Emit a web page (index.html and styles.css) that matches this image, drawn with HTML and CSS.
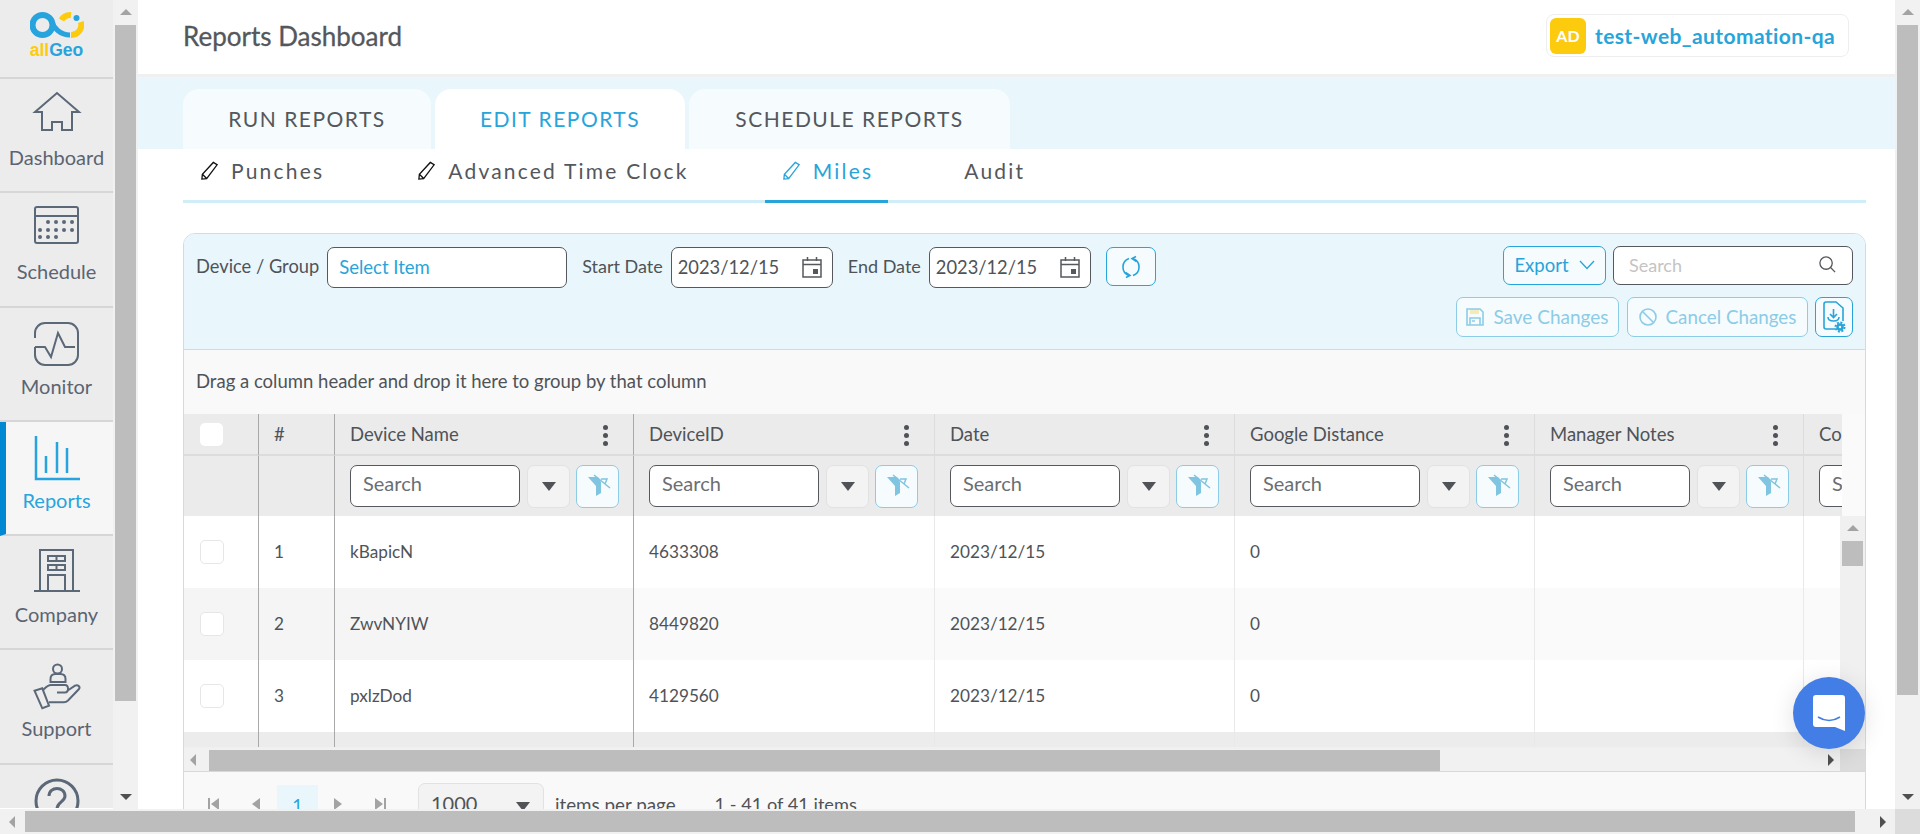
FILE: index.html
```html
<!doctype html>
<html lang="en">
<head>
    <meta charset="utf-8">
    <title>Reports Dashboard</title>
    <link rel="stylesheet" href="styles.css">
</head>
<body>
    <div class="page">
        <nav class="sidebar">
            <div class="logo">
                <svg class="logo-mark" viewBox="0 0 54 28" width="54" height="28">
                    <circle cx="12.500" cy="14" r="10" fill="none" stroke="#27a4de" stroke-width="6"/>
                    <path d="M22 11C24 17 30 24 40 24" fill="none" stroke="#27a4de" stroke-width="5"/>
                    <path d="M31.500 9A10 10 0 0 1 41 4" fill="none" stroke="#fdcb0e" stroke-width="6"/>
                    <path d="M50.800 11A10 10 0 0 1 41 24" fill="none" stroke="#fdcb0e" stroke-width="6"/>
                    <circle cx="46.500" cy="7" r="3" fill="#27a4de"/>
                </svg>
                <div class="logo-name"><span class="logo-all">all</span>Geo</div>
            </div>
            <a class="nav-item">
                <svg class="nav-icon" viewBox="0 0 46 46"><path d="M1 20 23 1 45 20H38V38H28V30H18V38H8V20Z"/></svg>
                <span>Dashboard</span>
            </a>
            <a class="nav-item">
                <svg class="nav-icon" viewBox="0 0 46 46">
                    <rect x="1" y="1" width="43" height="36" rx="2"/>
                    <path d="M1 10H44"/>
                    <path class="dots" d="M14 16h.01M22 16h.01M30 16h.01M38 16h.01M6 24h.01M14 24h.01M22 24h.01M30 24h.01M38 24h.01M6 31h.01M14 31h.01M22 31h.01"/>
                </svg>
                <span>Schedule</span>
            </a>
            <a class="nav-item">
                <svg class="nav-icon" viewBox="0 0 46 46">
                    <path d="M1 17V12A10 10 0 0 1 11 2H34A10 10 0 0 1 44 12V34A10 10 0 0 1 34 44H11A10 10 0 0 1 1 34V26"/>
                    <path d="M1 26H11L17 36 24 12 31 26H41"/>
                </svg>
                <span>Monitor</span>
            </a>
            <a class="nav-item active">
                <svg class="nav-icon" viewBox="0 0 46 46">
                    <path d="M2 1V44H46"/>
                    <path d="M12 21V38M23 7V38M33 13V38"/>
                </svg>
                <span>Reports</span>
            </a>
            <a class="nav-item">
                <svg class="nav-icon" viewBox="0 0 46 46">
                    <path d="M0 42H46M6 42V1H39V42"/>
                    <rect x="14" y="7" width="17" height="5"/>
                    <rect x="14" y="16" width="17" height="5"/>
                    <path d="M22.500 7V12M22.500 16V21M14 42V26H31V42"/>
                </svg>
                <span>Company</span>
            </a>
            <a class="nav-item">
                <svg class="nav-icon" viewBox="0 0 46 46">
                    <circle cx="23.500" cy="6" r="4.500"/>
                    <path d="M16.500 19V16Q16.500 11 21.500 11H26.500Q31.500 11 31.500 16V19Z"/>
                    <path d="M0.500 27.700 8.300 25.300 15 42.700 8.300 45.300Z"/>
                    <path d="M9.300 26.700C12 24 14 22 17 22H31C35 22 35 29.500 31 29.500H23M33 28 41 22.700C44 21 46.500 24 45 26L34 37.500Q32 39.300 30 39.300H15"/>
                </svg>
                <span>Support</span>
            </a>
            <a class="nav-item">
                <svg class="nav-icon help-icon" viewBox="0 0 46 46">
                    <circle cx="23" cy="23" r="21"/>
                    <path d="M15 18C15 8 31 8 31 18 31 24 23 24 23 31"/>
                </svg>
            </a>
        </nav>
        <div class="vbar">
            <div class="arrow-up"></div>
            <div class="vbar-thumb side-thumb"></div>
            <div class="arrow-down"></div>
        </div>

        <main class="main">
            <header class="topbar">
                <h1 class="title">Reports Dashboard</h1>
                <div class="account"><span class="avatar">AD</span><span class="account-name">test-web_automation-qa</span></div>
            </header>

            <div class="tabs-band">
                <a class="tab tab-run">RUN REPORTS</a>
                <a class="tab tab-edit active">EDIT REPORTS</a>
                <a class="tab tab-schedule">SCHEDULE REPORTS</a>
            </div>

            <div class="content">
                <div class="subtabs">
                    <a class="subtab">
                        <svg class="pencil" viewBox="0 0 20 20"><path d="M14 1.500 18 4 7 18.500 2 19 2.500 14ZM2.500 14 7 18.500"/></svg>
                        Punches
                    </a>
                    <a class="subtab">
                        <svg class="pencil" viewBox="0 0 20 20"><path d="M14 1.500 18 4 7 18.500 2 19 2.500 14ZM2.500 14 7 18.500"/></svg>
                        Advanced Time Clock
                    </a>
                    <a class="subtab active">
                        <svg class="pencil" viewBox="0 0 20 20"><path d="M14 1.500 18 4 7 18.500 2 19 2.500 14ZM2.500 14 7 18.500"/></svg>
                        Miles
                    </a>
                    <a class="subtab no-icon">Audit</a>
                </div>

                <section class="panel">
                    <div class="toolbar">
                        <div class="filters">
                            <label>Device / Group</label>
                            <div class="field field-device link">Select Item</div>
                            <label class="date-label">Start Date</label>
                            <div class="field field-date">2023/12/15
                                <svg class="cal" viewBox="0 0 20 22"><path d="M1 4H19V21H1ZM1 8.500H19M5.500 1V5M14.500 1V5"/><rect class="cal-fill" x="11" y="13" width="5" height="5"/></svg>
                            </div>
                            <label class="date-label">End Date</label>
                            <div class="field field-date">2023/12/15
                                <svg class="cal" viewBox="0 0 20 22"><path d="M1 4H19V21H1ZM1 8.500H19M5.500 1V5M14.500 1V5"/><rect class="cal-fill" x="11" y="13" width="5" height="5"/></svg>
                            </div>
                            <button class="btn btn-refresh">
                                <svg viewBox="0 0 24 24" width="24" height="24"><path d="M10 3.500A9 9 0 0 0 10 20.500M14 20.500A9 9 0 0 0 14 3.500M6.500 17.500 11 20.500 7 22.500M17.500 6.500 13 3.500 17 1.500"/></svg>
                            </button>
                        </div>
                        <div class="actions">
                            <div class="actions-row">
                                <button class="btn btn-export">Export
                                    <svg viewBox="0 0 16 10" width="16" height="10"><path d="M1 1 8 8.500 15 1"/></svg>
                                </button>
                                <div class="field field-search">Search
                                    <svg viewBox="0 0 20 20" width="19" height="19"><circle cx="8.500" cy="8.500" r="6.500"/><path d="M13.500 13.500 18 18"/></svg>
                                </div>
                            </div>
                            <div class="actions-row row-second">
                                <button class="btn btn-faded btn-save">
                                    <svg viewBox="0 0 18 18" width="18" height="18"><path class="floppy" d="M4 1H13V6H4Z"/><path d="M1 1H14L17 4V17H1Z"/><path d="M4 17V10H14V17M6 13H9"/></svg>
                                    Save Changes
                                </button>
                                <button class="btn btn-faded btn-cancel">
                                    <svg viewBox="0 0 18 18" width="18" height="18"><circle cx="9" cy="9" r="8"/><path d="M3.500 3.500 14.500 14.500"/></svg>
                                    Cancel Changes
                                </button>
                                <button class="btn btn-config">
                                    <svg viewBox="0 0 24 32" width="24" height="32">
                                        <path d="M13 28H4Q2 28 2 26V3Q2 1 4 1H14L21 7V20"/>
                                        <path d="M11.500 8V16M8 13 11.500 16.500 15 13M6 16Q6 20 11.500 20 17 20 17 16"/>
                                        <circle class="gear" cx="18" cy="26" r="2.500"/>
                                        <circle class="gear-teeth" cx="18" cy="26" r="4.500"/>
                                    </svg>
                                </button>
                            </div>
                        </div>
                    </div>

                    <div class="group-hint">Drag a column header and drop it here to group by that column</div>

                    <div class="grid-head">
                        <div class="head-scroll">
                            <div class="cols">
                                <div class="hcell"><span class="check check-head"></span></div>
                                <div class="hcell">#</div>
                                <div class="hcell">Device Name<span class="kebab"></span></div>
                                <div class="hcell light">DeviceID<span class="kebab"></span></div>
                                <div class="hcell light">Date<span class="kebab"></span></div>
                                <div class="hcell light">Google Distance<span class="kebab"></span></div>
                                <div class="hcell light">Manager Notes<span class="kebab"></span></div>
                                <div class="hcell light">Comments</div>
                            </div>
                            <div class="cols filter-row">
                                <div class="fcell"></div>
                                <div class="fcell"></div>
                                <div class="fcell">
                                    <div class="filter-input">Search</div>
                                    <button class="filter-op"></button>
                                    <button class="filter-clear"><svg viewBox="1 1 41 41"><path class="fill" d="M12 12H22L25 17V28L20 31V21Z"/><path class="line" d="M18 10 34 23M25 14H31L29 19"/></svg></button>
                                </div>
                                <div class="fcell light">
                                    <div class="filter-input">Search</div>
                                    <button class="filter-op"></button>
                                    <button class="filter-clear"><svg viewBox="1 1 41 41"><path class="fill" d="M12 12H22L25 17V28L20 31V21Z"/><path class="line" d="M18 10 34 23M25 14H31L29 19"/></svg></button>
                                </div>
                                <div class="fcell light">
                                    <div class="filter-input">Search</div>
                                    <button class="filter-op"></button>
                                    <button class="filter-clear"><svg viewBox="1 1 41 41"><path class="fill" d="M12 12H22L25 17V28L20 31V21Z"/><path class="line" d="M18 10 34 23M25 14H31L29 19"/></svg></button>
                                </div>
                                <div class="fcell light">
                                    <div class="filter-input">Search</div>
                                    <button class="filter-op"></button>
                                    <button class="filter-clear"><svg viewBox="1 1 41 41"><path class="fill" d="M12 12H22L25 17V28L20 31V21Z"/><path class="line" d="M18 10 34 23M25 14H31L29 19"/></svg></button>
                                </div>
                                <div class="fcell light">
                                    <div class="filter-input narrow">Search</div>
                                    <button class="filter-op"></button>
                                    <button class="filter-clear"><svg viewBox="1 1 41 41"><path class="fill" d="M12 12H22L25 17V28L20 31V21Z"/><path class="line" d="M18 10 34 23M25 14H31L29 19"/></svg></button>
                                </div>
                                <div class="fcell light">
                                    <div class="filter-input">Search</div>
                                </div>
                            </div>
                        </div>
                    </div>

                    <div class="grid-body">
                        <div class="grid-rows">
                            <div class="cols data-row">
                                <div class="cell"><span class="check"></span></div>
                                <div class="cell">1</div>
                                <div class="cell">kBapicN</div>
                                <div class="cell light">4633308</div>
                                <div class="cell light">2023/12/15</div>
                                <div class="cell light">0</div>
                                <div class="cell light"></div>
                                <div class="cell light"></div>
                            </div>
                            <div class="cols data-row alt">
                                <div class="cell locked"><span class="check"></span></div>
                                <div class="cell locked">2</div>
                                <div class="cell locked">ZwvNYIW</div>
                                <div class="cell light">8449820</div>
                                <div class="cell light">2023/12/15</div>
                                <div class="cell light">0</div>
                                <div class="cell light"></div>
                                <div class="cell light"></div>
                            </div>
                            <div class="cols data-row">
                                <div class="cell"><span class="check"></span></div>
                                <div class="cell">3</div>
                                <div class="cell">pxlzDod</div>
                                <div class="cell light">4129560</div>
                                <div class="cell light">2023/12/15</div>
                                <div class="cell light">0</div>
                                <div class="cell light"></div>
                                <div class="cell light"></div>
                            </div>
                            <div class="cols data-row rest">
                                <div class="cell"></div>
                                <div class="cell"></div>
                                <div class="cell"></div>
                                <div class="cell light"></div>
                                <div class="cell light"></div>
                                <div class="cell light"></div>
                                <div class="cell light"></div>
                                <div class="cell light"></div>
                            </div>
                        </div>
                        <div class="grid-vbar">
                            <div class="arrow-up"></div>
                            <div class="vbar-thumb grid-thumb"></div>
                        </div>
                    </div>

                    <div class="hbar grid-hbar">
                        <div class="arrow-left"></div>
                        <div class="hbar-thumb grid-hthumb"></div>
                        <div class="arrow-right"></div>
                        <div class="corner"></div>
                    </div>

                    <div class="pager">
                        <span class="page-link first"></span>
                        <span class="page-link prev"></span>
                        <span class="page-current">1</span>
                        <span class="page-link next"></span>
                        <span class="page-link last"></span>
                        <div class="page-size">1000<span class="caret"></span></div>
                        <span class="page-note">items per page</span>
                        <span class="page-info">1 - 41 of 41 items</span>
                    </div>
                </section>
            </div>

            <button class="chat">
                <svg viewBox="0 0 32 36" width="32" height="36">
                    <path class="chat-bubble" d="M3 0H29Q32 0 32 3V36L22 32H3Q0 32 0 29V3Q0 0 3 0Z"/>
                    <path class="chat-smile" d="M5 22Q16 29 27 22"/>
                </svg>
            </button>
        </main>

        <div class="vbar">
            <div class="arrow-up"></div>
            <div class="vbar-thumb page-thumb"></div>
            <div class="arrow-down"></div>
        </div>
    </div>

    <div class="hbar page-hbar">
        <div class="arrow-left"></div>
        <div class="hbar-thumb page-hthumb"></div>
        <div class="arrow-right"></div>
        <div class="corner"></div>
    </div>
</body>
</html>
```

FILE: styles.css
```css
* {
    box-sizing: border-box;
}

html, body {
    height: 100%;
}

body {
    margin: 0;
    display: flex;
    flex-direction: column;
    overflow: hidden;
    font-family: Lato, 'Open Sans', sans-serif;
    color: #4f5358;
    background-color: #fff;
}

button {
    font-family: inherit;
    background: none;
    padding: 0;
}

.page {
    display: flex;
    height: 809px;
    flex: none;
}

/* sidebar */
.sidebar {
    width: 113px;
    flex: none;
    height: 808px;
    overflow: hidden;
    background-color: #ececec;
}

.logo {
    height: 79px;
    padding-top: 11px;
    border-bottom: 2px solid #d6d6d6;
    text-align: center;
}

.logo-mark {
    display: block;
    margin: 0 auto;
}

.logo-name {
    margin-top: 2px;
    font-family: 'Liberation Sans', sans-serif;
    font-size: 17.500px;
    line-height: 19px;
    font-weight: 700;
    color: #27a4de;
}

.logo-all {
    color: #fdcb0e;
}

.nav-item {
    display: flex;
    flex-direction: column;
    align-items: center;
    height: 114.300px;
    padding-top: 13px;
    border-bottom: 2px solid #d6d6d6;
    font-size: 20px;
    line-height: 24px;
    color: #5b6472;
}

.nav-icon {
    width: 46px;
    height: 46px;
    flex: none;
    margin-bottom: 7px;
    fill: none;
    stroke: #5b6878;
    stroke-width: 2;
    overflow: visible;
}

.dots {
    stroke-width: 4;
    stroke-linecap: round;
}

.help-icon {
    stroke-width: 3;
}

.nav-item.active {
    background-color: #f6f6f6;
    border-left: 6px solid #0088d2;
    padding-right: 6px;
    color: #27a4de;
}

.nav-item.active .nav-icon {
    stroke: #27a4de;
    stroke-width: 2.500;
}

/* scrollbars */
.vbar {
    width: 25px;
    flex: none;
    display: flex;
    flex-direction: column;
    align-items: center;
    position: relative;
    background-color: #f1f1f1;
}

.vbar-thumb {
    width: 21px;
    background-color: #bdbdbd;
}

.side-thumb {
    height: 676px;
}

.page-thumb {
    height: 670px;
}

.arrow-up, .arrow-down {
    width: 100%;
    height: 25px;
    flex: none;
    position: relative;
}

.arrow-up::after, .arrow-down::after {
    content: "";
    position: absolute;
    left: 7px;
    border-left: 6px solid transparent;
    border-right: 6px solid transparent;
}

.arrow-up::after {
    top: 9px;
    border-bottom: 6px solid #a3a3a3;
}

.arrow-down {
    margin-top: auto;
    margin-bottom: 3px;
}

.arrow-down::after {
    bottom: 6px;
    border-top: 6px solid #505050;
}

.hbar {
    display: flex;
    align-items: center;
    background-color: #f1f1f1;
}

.page-hbar {
    height: 25px;
    flex: none;
}

.hbar-thumb {
    height: 21px;
    background-color: #bdbdbd;
}

.page-hthumb {
    width: 1830px;
}

.arrow-left, .arrow-right {
    height: 100%;
    flex: none;
    position: relative;
}

.arrow-left {
    width: 25px;
}

.arrow-right {
    flex: 1;
}

.arrow-left::after, .arrow-right::after {
    content: "";
    position: absolute;
    top: 50%;
    margin-top: -6px;
    border-top: 6px solid transparent;
    border-bottom: 6px solid transparent;
}

.arrow-left::after {
    left: 9px;
    border-right: 6px solid #a3a3a3;
}

.arrow-right::after {
    right: 9px;
    border-left: 6px solid #505050;
}

.corner {
    width: 25px;
    height: 100%;
    flex: none;
    background-color: #dcdcdc;
}

/* main */
.main {
    flex: 1;
    min-width: 0;
    position: relative;
    overflow: hidden;
    background-color: #fff;
}

.topbar {
    height: 77px;
    padding: 0 46px 3px 45px;
    display: flex;
    align-items: center;
    justify-content: space-between;
    border-bottom: 3px solid #f0f0f0;
}

.title {
    margin: 0;
    font-size: 26px;
    font-weight: 400;
    color: #54575b;
    -webkit-text-stroke: 0.3px #54575b;
}

.account {
    width: 303px;
    height: 43px;
    padding-left: 3px;
    display: flex;
    align-items: center;
    border: 1px solid #eeeeee;
    border-radius: 8px;
}

.avatar {
    width: 36px;
    height: 36px;
    margin-right: 9px;
    display: flex;
    align-items: center;
    justify-content: center;
    border-radius: 6px;
    background-color: #fdcb0e;
    color: #fff;
    font-size: 16px;
    font-weight: 700;
}

.account-name {
    font-size: 21px;
    font-weight: 700;
    letter-spacing: 0.4px;
    color: #27a4d9;
}

.tabs-band {
    height: 72px;
    padding: 12px 0 0 45px;
    display: flex;
    gap: 4px;
    background-color: #e9f7fd;
}

.tab {
    padding-bottom: 2px;
    display: flex;
    align-items: center;
    justify-content: center;
    border-radius: 16px 16px 0 0;
    background-color: #f6fbfe;
    font-size: 21px;
    letter-spacing: 1.500px;
    color: #54575b;
}

.tab-run {
    width: 248px;
}

.tab-edit {
    width: 250px;
}

.tab-schedule {
    width: 321px;
}

.tab.active {
    background-color: #fff;
    color: #27a4d9;
}

.content {
    padding: 0 29px 0 45px;
}

.subtabs {
    height: 54px;
    display: flex;
    gap: 61px;
    border-bottom: 3px solid #d0eef8;
}

.subtab {
    height: 54px;
    padding: 0 15px 9px 17px;
    display: flex;
    align-items: center;
    gap: 12px;
    border-bottom: 3px solid transparent;
    font-size: 21px;
    letter-spacing: 2.200px;
    color: #54575b;
    white-space: nowrap;
}

.subtab.no-icon {
    padding-left: 15px;
}

.subtab.active {
    border-bottom-color: #27a4d9;
    color: #27a4d9;
}

.pencil {
    width: 19px;
    height: 19px;
    fill: none;
    stroke: #111;
    stroke-width: 1.400;
}

.subtab.active .pencil {
    stroke: #27a4d9;
}

/* panel */
.panel {
    margin-top: 30px;
    border: 1px solid #c5e0ea;
    border-radius: 12px 12px 0 0;
    font-size: 18.500px;
    overflow: hidden;
}

.toolbar {
    height: 116px;
    padding: 13px 12px 0;
    display: flex;
    justify-content: space-between;
    border-bottom: 1px solid #c5e0ea;
    background-color: #e9f7fd;
}

.filters {
    height: 41px;
    display: flex;
    align-items: center;
}

.filters label {
    margin-right: 8px;
    padding-bottom: 4px;
    font-size: 18.300px;
    white-space: nowrap;
}

.filters .date-label {
    margin-left: 15px;
    font-size: 18px;
}

.field {
    height: 41px;
    display: flex;
    align-items: center;
    border: 1px solid #55585c;
    border-radius: 7px;
    background-color: #fff;
}

.field-device {
    width: 240px;
    padding: 0 0 2px 11px;
}

.link {
    color: #27a4d9;
}

.field-date {
    width: 162px;
    padding: 0 10px 2px 6px;
    justify-content: space-between;
    font-size: 18.300px;
}

.cal {
    width: 20px;
    height: 22px;
    fill: none;
    stroke: #55585c;
    stroke-width: 1.500;
}

.cal-fill {
    fill: #55585c;
    stroke: none;
}

.btn {
    display: inline-flex;
    align-items: center;
    justify-content: center;
    border: 1px solid #27a4d9;
    border-radius: 7px;
    background-color: #f6fbfe;
    color: #27a4d9;
    font-size: 18.500px;
}

.btn svg {
    fill: none;
    stroke: currentColor;
    stroke-width: 1.600;
}

.btn-refresh {
    width: 50px;
    height: 39px;
    margin: -2px 0 0 15px;
}

.actions {
    margin-top: -1px;
    display: flex;
    flex-direction: column;
    align-items: flex-end;
}

.actions-row {
    display: flex;
    height: 39px;
}

.btn-export {
    width: 103px;
    gap: 10px;
    margin-right: 7px;
    padding-bottom: 2px;
}

.btn-export svg {
    stroke-width: 1.300;
}

.field-search {
    width: 240px;
    height: 39px;
    padding: 0 15px 2px;
    justify-content: space-between;
    font-size: 18px;
    color: #c4c4c4;
}

.field-search svg {
    fill: none;
    stroke: #55585c;
    stroke-width: 1.400;
}

.row-second {
    height: 40px;
    margin-top: 12px;
}

.btn-faded {
    gap: 9px;
    padding-bottom: 1px;
    border-color: #8ccce6;
    color: #8ccce6;
    white-space: nowrap;
}

.btn-save {
    width: 163px;
    margin-right: 8px;
    font-size: 19px;
}

.btn-save svg .floppy {
    fill: #f2ecbc;
    stroke: none;
}

.btn-cancel {
    width: 181px;
    margin-right: 7px;
    font-size: 18.800px;
}

.btn-config {
    width: 38px;
}

.btn-config svg .gear {
    stroke-width: 2.500;
}

.btn-config svg .gear-teeth {
    stroke-width: 2;
    stroke-dasharray: 2 1.500;
}

.group-hint {
    height: 64px;
    padding: 0 0 3px 12px;
    display: flex;
    align-items: center;
    background-color: #f9f9f9;
    white-space: nowrap;
}

/* grid */
.grid-head {
    height: 102px;
    padding-right: 23px;
    background-color: #fafafa;
}

.head-scroll {
    height: 100%;
    overflow: hidden;
}

.cols {
    display: grid;
    grid-template-columns: 75px 76px 299px 301px 300px 300px 269px 300px;
    width: 2120px;
}

.hcell {
    height: 42px;
    padding: 0 15px;
    position: relative;
    display: flex;
    align-items: center;
    background-color: #ebebeb;
    border-right: 1px solid #a9a9a9;
    border-bottom: 2px solid #dcdcdc;
    white-space: nowrap;
}

.hcell.light, .fcell.light {
    border-right-color: #dcdcdc;
}

.kebab {
    position: absolute;
    right: 25px;
    top: 11px;
    width: 5px;
    height: 5px;
    border-radius: 50%;
    background-color: #4f5358;
    box-shadow: 0 8px 0 #4f5358, 0 16px 0 #4f5358;
}

.fcell {
    height: 60px;
    padding: 0 15px;
    display: flex;
    align-items: center;
    background-color: #ebebeb;
    border-right: 1px solid #a9a9a9;
}

.filter-input {
    width: 170px;
    height: 42px;
    margin-right: 7px;
    padding: 0 0 6px 12px;
    flex: none;
    display: flex;
    align-items: center;
    border: 1px solid #55585c;
    border-radius: 7px;
    background-color: #fff;
    font-size: 20px;
    color: #6b6e72;
}

.filter-input.narrow {
    width: 140px;
}

.filter-op {
    width: 43px;
    height: 43px;
    margin-right: 6px;
    flex: none;
    position: relative;
    border: 1px solid #e2e2e2;
    border-radius: 7px;
    background-color: #f3f3f3;
}

.filter-op::after {
    content: "";
    position: absolute;
    left: 14px;
    top: 16px;
    border-left: 7px solid transparent;
    border-right: 7px solid transparent;
    border-top: 9px solid #4f5358;
}

.filter-clear {
    width: 43px;
    height: 43px;
    flex: none;
    border: 1px solid #8ccce6;
    border-radius: 7px;
    background-color: #f6fbfe;
}

.filter-clear svg {
    display: block;
    width: 41px;
    height: 41px;
}

.filter-clear .fill {
    fill: #7fc4e0;
}

.filter-clear .line {
    fill: none;
    stroke: #7fc4e0;
    stroke-width: 1.500;
}

.grid-body {
    height: 233px;
    display: flex;
}

.grid-rows {
    flex: 1;
    min-width: 0;
    overflow: hidden;
    background-color: #f0f0f0;
}

.data-row .cell {
    height: 72px;
    padding: 0 15px 2px;
    display: flex;
    align-items: center;
    background-color: #fff;
    border-right: 1px solid #a9a9a9;
    font-size: 17.200px;
}

.data-row .cell.light {
    border-right-color: #e9e9e9;
}

.data-row.alt .cell {
    background-color: #fafafa;
}

.data-row.alt .cell.locked {
    background-color: #f5f5f5;
}

.data-row.rest .cell {
    height: 15px;
    background-color: #ececec;
}

.check {
    width: 24px;
    height: 24px;
    margin: 2px 0 0 1px;
    border: 1px solid #e6e6e6;
    border-radius: 5px;
    background-color: #fff;
}

.check-head {
    width: 23px;
    height: 23px;
    margin-top: 0;
    border: 0;
}

.grid-vbar {
    width: 25px;
    flex: none;
    display: flex;
    flex-direction: column;
    align-items: center;
    background-color: #f0f0f0;
}

.grid-thumb {
    height: 25px;
}

.grid-hbar {
    height: 23px;
    border-bottom: 1px solid #c5e0ea;
}

.grid-hbar .hbar-thumb {
    height: 21px;
}

.grid-hthumb {
    width: 1231px;
}

.grid-hbar .arrow-left::after {
    left: 6px;
}

.grid-hbar .arrow-right::after {
    right: 6px;
}

.pager {
    height: 60px;
    padding: 13px 0 0 11px;
    display: flex;
    align-items: flex-start;
    background-color: #f9f9f9;
}

.page-link {
    width: 41px;
    height: 40px;
    flex: none;
    position: relative;
}

.page-link::after {
    content: "";
    position: absolute;
    top: 13px;
    left: 16px;
    border-top: 6px solid transparent;
    border-bottom: 6px solid transparent;
}

.first::after, .prev::after {
    border-right: 8px solid #a3a3a3;
}

.next::after, .last::after {
    border-left: 8px solid #a3a3a3;
}

.first::before, .last::before {
    content: "";
    position: absolute;
    top: 13px;
    width: 2px;
    height: 12px;
    background-color: #a3a3a3;
}

.first::before {
    left: 13px;
}

.last::before {
    left: 25px;
}

.page-current {
    width: 41px;
    height: 40px;
    flex: none;
    display: flex;
    justify-content: center;
    padding-top: 9px;
    background-color: #e9f7fd;
    color: #27a4d9;
    font-size: 18px;
}

.page-size {
    width: 126px;
    height: 44px;
    margin: -2px 11px 0 0;
    padding: 7px 0 0 12px;
    position: relative;
    border: 1px solid #e2e2e2;
    border-radius: 7px;
    background-color: #f3f3f3;
    font-size: 20px;
}

.last {
    margin-right: 18px;
}

.caret {
    position: absolute;
    right: 13px;
    top: 18px;
    border-left: 7px solid transparent;
    border-right: 7px solid transparent;
    border-top: 9px solid #4f5358;
}

.page-note {
    padding-top: 8px;
    margin-right: 39px;
    font-size: 18.800px;
}

.page-info {
    padding-top: 8px;
    font-size: 18.200px;
}

/* chat launcher */
.chat {
    position: absolute;
    left: 1655px;
    top: 677px;
    width: 72px;
    height: 72px;
    padding: 0;
    display: flex;
    align-items: center;
    justify-content: center;
    border: 0;
    border-radius: 50%;
    background-color: #437de6;
    box-shadow: 0 4px 24px rgba(0, 0, 0, 0.12);
}

.chat-bubble {
    fill: #fff;
}

.chat-smile {
    fill: none;
    stroke: #437de6;
    stroke-width: 1.500;
}
```
